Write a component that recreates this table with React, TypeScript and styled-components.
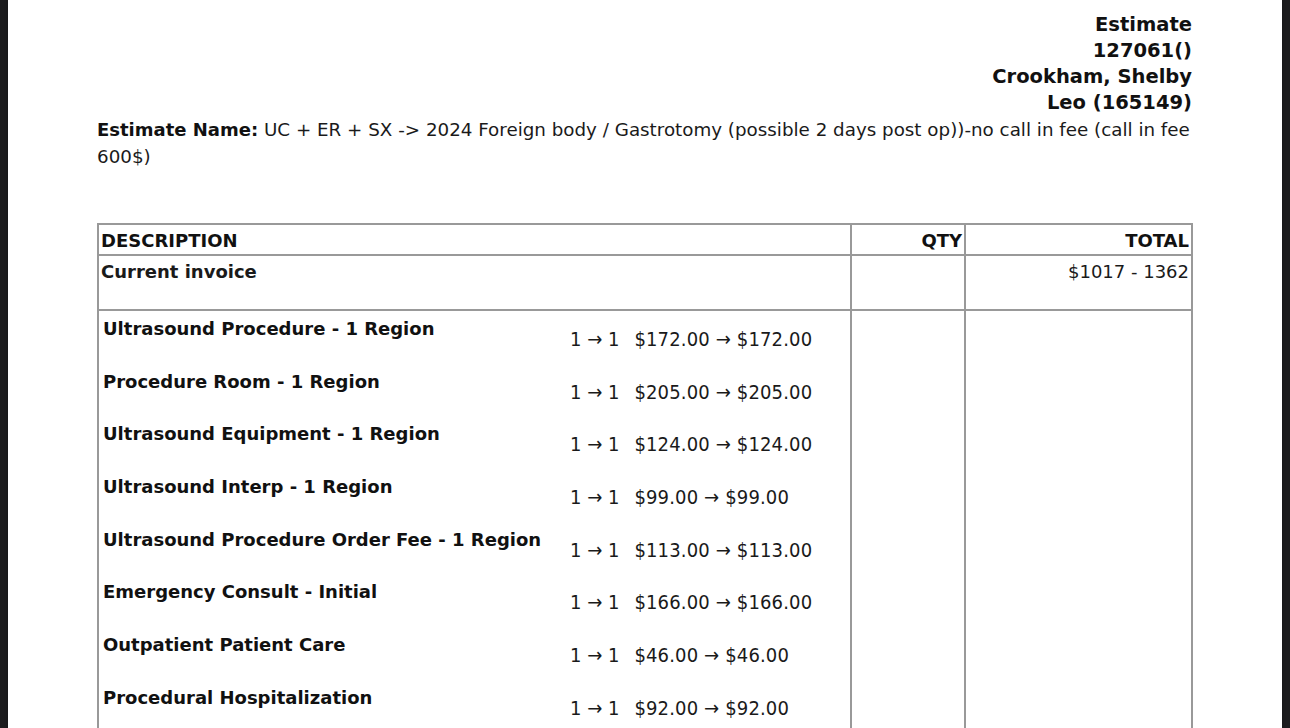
import React from 'react'
import styled, { createGlobalStyle } from 'styled-components'

const GlobalStyle = createGlobalStyle`
    html, body {
        margin: 0;
        padding: 0;
        background: #1c1c1e;
    }
    body {
        font-family: "DejaVu Sans", "Liberation Sans", sans-serif;
        color: #111;
    }
`

const Page = styled.div`
    background: #fff;
    margin: 0 8px;
    min-height: 728px;
    padding: 12px 90px 0 89px;
    box-shadow: 0 0 3px rgba(0, 0, 0, 0.35);
    box-sizing: border-box;
`

const PatientBlock = styled.div`
    text-align: right;
    font-weight: bold;
    font-size: 19.5px;
    line-height: 26px;
`

const EstimateName = styled.p`
    margin: 0;
    font-size: 18.3px;
    line-height: 27px;
    color: #1a1a1a;

    b {
        color: #111;
        font-size: 18px;
    }
`

const Table = styled.table`
    margin-top: 53px;
    width: 1096px;
    border-collapse: collapse;
    font-size: 18px;
    line-height: 27px;
`

const HeadCell = styled.th<{ $align?: 'left' | 'right'; $width?: number }>`
    border: 2px solid #999;
    padding: 2px 2px 0 2px;
    text-align: ${p => p.$align || 'left'};
    width: ${p => (p.$width ? `${p.$width}px` : 'auto')};
    font-weight: bold;
`

const Cell = styled.td<{ $align?: 'left' | 'right'; $bold?: boolean }>`
    border: 2px solid #999;
    padding: 2px 2px 24px 2px;
    vertical-align: top;
    text-align: ${p => p.$align || 'left'};
    font-weight: ${p => (p.$bold ? 'bold' : 'normal')};
    color: #1a1a1a;
`

const ItemsCell = styled.td`
    border: 2px solid #999;
    padding: 1px 0 60px 4px;
    vertical-align: top;
`

const Item = styled.div`
    display: grid;
    grid-template-columns: 467px auto;
    height: 52.7px;
`

const ItemName = styled.div`
    font-weight: bold;
    padding-top: 3px;
`

const ItemPrice = styled.div`
    font-family: "DejaVu Sans Condensed", "DejaVu Sans", sans-serif;
    font-size: 20px;
    padding-top: 14px;
    color: #1a1a1a;
    white-space: pre;
`

const Amount = styled.span`
    margin-left: 15px;
    letter-spacing: 0.15px;
`

const items = [
    { name: 'Ultrasound Procedure - 1 Region', price: '$172.00' },
    { name: 'Procedure Room - 1 Region', price: '$205.00' },
    { name: 'Ultrasound Equipment - 1 Region', price: '$124.00' },
    { name: 'Ultrasound Interp - 1 Region', price: '$99.00' },
    { name: 'Ultrasound Procedure Order Fee - 1 Region', price: '$113.00' },
    { name: 'Emergency Consult - Initial', price: '$166.00' },
    { name: 'Outpatient Patient Care', price: '$46.00' },
    { name: 'Procedural Hospitalization', price: '$92.00' },
]

const App: React.FC = () => {
    return (
        <>
            <GlobalStyle />
            <Page>
                <PatientBlock>
                    <div>Estimate</div>
                    <div>127061()</div>
                    <div>Crookham, Shelby</div>
                    <div>Leo (165149)</div>
                </PatientBlock>
                <EstimateName>
                    <b>Estimate Name:</b> UC + ER + SX -&gt; 2024 Foreign body / Gastrotomy (possible 2 days post op))-no call in fee (call in fee 600$)
                </EstimateName>
                <Table>
                    <thead>
                        <tr>
                            <HeadCell>DESCRIPTION</HeadCell>
                            <HeadCell $align="right" $width={108}>QTY</HeadCell>
                            <HeadCell $align="right" $width={221}>TOTAL</HeadCell>
                        </tr>
                    </thead>
                    <tbody>
                        <tr>
                            <Cell $bold>Current invoice</Cell>
                            <Cell />
                            <Cell $align="right">$1017 - 1362</Cell>
                        </tr>
                        <tr>
                            <ItemsCell>
                                {items.map(item => (
                                    <Item key={item.name}>
                                        <ItemName>{item.name}</ItemName>
                                        <ItemPrice>
                                            {'1 → 1'}
                                            <Amount>{`${item.price} → ${item.price}`}</Amount>
                                        </ItemPrice>
                                    </Item>
                                ))}
                            </ItemsCell>
                            <Cell />
                            <Cell />
                        </tr>
                    </tbody>
                </Table>
            </Page>
        </>
    )
}

export default App
